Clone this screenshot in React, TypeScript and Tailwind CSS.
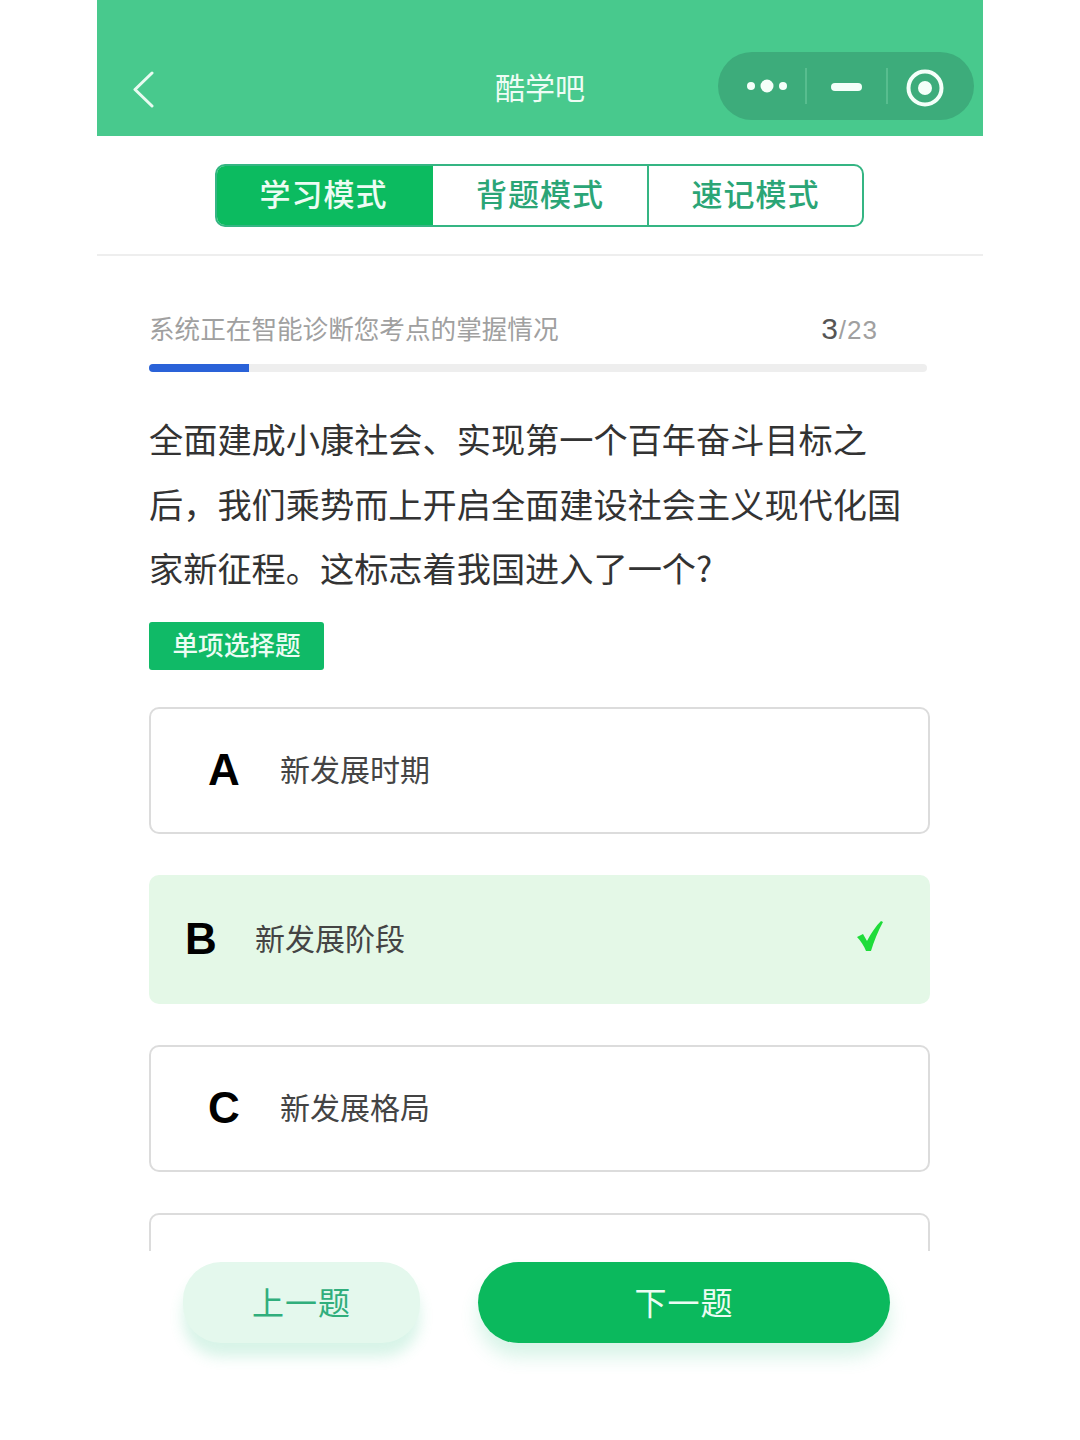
import React from "react";

const FONT = "font-['Noto_Sans_CJK_SC','Noto_Sans',sans-serif]";
const LATIN = "font-['Liberation_Sans','Noto_Sans_CJK_SC',sans-serif]";

function Option({ letter, text, selected }: { letter?: string; text?: string; selected?: boolean }) {
  if (selected) {
    return (
      <div className="flex h-[129px] shrink-0 items-center rounded-[10px] bg-[#e4f8e7] pl-[36px] pr-[46px]">
        <span className={`${LATIN} w-[70px] text-[44px] font-bold leading-none text-black`}>{letter}</span>
        <span className="flex-1 pb-[5px] text-[30px] leading-none text-[#444]">{text}</span>
        <svg className="mb-[6px]" width="28" height="32" viewBox="0 0 28 32">
          <path d="M1 17 L7 14 L11 21 C15 13 20 6 25 1 L27 2 C22 11 18 21 15 31 L10 31 C8 26 5 21 1 17 Z" fill="#1fdc3a" />
        </svg>
      </div>
    );
  }
  return (
    <div className="flex h-[127px] shrink-0 items-center rounded-[10px] border-2 border-[#dcdcdc] bg-white pl-[57px]">
      <span className={`${LATIN} w-[72px] text-[44px] font-bold leading-none text-black`}>{letter}</span>
      <span className="pb-[5px] text-[30px] leading-none text-[#444]">{text}</span>
    </div>
  );
}

export default function App() {
  return (
    <div className={`${FONT} flex h-[1440px] w-[1080px] justify-center overflow-hidden bg-white`}>
      <div className="flex w-[886px] flex-col">
        {/* Navigation bar */}
        <header className="grid h-[136px] shrink-0 grid-cols-[1fr_auto_1fr] bg-[#48c98d] pt-[52px]">
          <div className="flex h-[72px] items-center pl-[35px]">
            <svg className="mt-[3px]" width="22" height="37" viewBox="0 0 22 37" fill="none">
              <path d="M20 2 L3 18.5 L20 35" stroke="#e9fbf1" strokeWidth="3" strokeLinecap="round" strokeLinejoin="round" />
            </svg>
          </div>
          <div className="flex h-[72px] items-center pb-[5px] text-[30px] leading-none text-[#eefcf4]">酷学吧</div>
          <div className="flex justify-end pr-[9px]">
            <div className="flex h-[68px] w-[256px] items-center rounded-full bg-[#3dac7b] pl-[28px]">
              <svg width="42" height="16" viewBox="0 0 42 16">
                <circle cx="5" cy="8" r="4" fill="#f4fff9" />
                <circle cx="21" cy="8" r="6.5" fill="#f4fff9" />
                <circle cx="37" cy="8" r="4" fill="#f4fff9" />
              </svg>
              <div className="ml-[17px] h-[36px] w-[2px] bg-[#58bd8f]" />
              <div className="ml-[24px] mt-[2px] h-[8px] w-[31px] rounded-full bg-[#f4fff9]" />
              <div className="ml-[24px] h-[36px] w-[2px] bg-[#58bd8f]" />
              <svg className="ml-[18px] mt-[4px]" width="38" height="38" viewBox="0 0 38 38" fill="none">
                <circle cx="19" cy="19" r="16.5" stroke="#f4fff9" strokeWidth="4" />
                <circle cx="19" cy="19" r="7" fill="#f4fff9" />
              </svg>
            </div>
          </div>
        </header>

        {/* Mode tabs */}
        <div className="flex h-[120px] shrink-0 justify-center border-b-2 border-[#eeeeee] pr-[1px] pt-[28px]">
          <div className="flex h-[63px] w-[649px] overflow-hidden rounded-[10px] border-2 border-[#35b583] bg-white">
            <div className="flex w-[216px] items-center justify-center bg-[#0cbb60] pb-[7px] pr-[3px] text-[31px] font-medium leading-none tracking-[1px] text-[#ecfcf3]">学习模式</div>
            <div className="flex w-[214px] items-center justify-center pb-[7px] text-[31px] font-medium leading-none tracking-[1px] text-[#2ba576]">背题模式</div>
            <div className="flex w-[215px] items-center justify-center border-l-2 border-[#35b583] pb-[7px] text-[31px] font-medium leading-none tracking-[1px] text-[#2ba576]">速记模式</div>
          </div>
        </div>

        <main className="flex min-h-0 flex-col px-[52px]">
          {/* Progress */}
          <div className="mt-[58px] flex h-[30px] items-center justify-between pr-[53px]">
            <span className="pb-[2px] text-[25.6px] leading-none text-[#a0a0a0]">系统正在智能诊断您考点的掌握情况</span>
            <span className={`${LATIN} text-[26px] leading-none tracking-[1px] text-[#a0a0a0]`}>
              <span className="text-[30px] text-[#555]">3</span>/23
            </span>
          </div>
          <div className="mt-[20px] h-[8px] w-[778px] overflow-hidden rounded-full bg-[#eeeeee]">
            <div className="h-full w-[100px] bg-[#2a62d8]" />
          </div>

          {/* Question */}
          <p className="mt-[34px] w-[770px] text-[34.2px] leading-[64.5px] text-[#333]">
            全面建成小康社会、实现第一个百年奋斗目标之后，我们乘势而上开启全面建设社会主义现代化国家新征程。这标志着我国进入了一个?
          </p>

          <div className="mt-[22px] flex h-[48px] w-[175px] items-center justify-center rounded-[3px] bg-[#10ba67] pb-[3px] text-[25.6px] font-medium leading-none text-[#ecfcf3]">
            单项选择题
          </div>

          {/* Options */}
          <div className="mt-[37px] flex h-[544px] w-[781px] flex-col gap-[41px] overflow-hidden">
            <Option letter="A" text="新发展时期" />
            <Option letter="B" text="新发展阶段" selected />
            <Option letter="C" text="新发展格局" />
            <Option />
          </div>
        </main>

        {/* Footer buttons */}
        <div className="mt-[11px] flex pl-[86px]">
          <button className="flex h-[81px] w-[237px] items-center justify-center rounded-[38px] bg-[#e4f8ed] pb-[3px] text-[32px] leading-none tracking-[1px] text-[#30ae7c] shadow-[0_14px_14px_rgba(60,200,140,0.2)]">
            上一题
          </button>
          <button className="ml-[58px] flex h-[81px] w-[412px] items-center justify-center rounded-full bg-[#0bb95d] pb-[3px] text-[32px] leading-none tracking-[1px] text-[#ecfcf3] shadow-[0_14px_18px_rgba(60,200,140,0.2)]">
            下一题
          </button>
        </div>
      </div>
    </div>
  );
}
